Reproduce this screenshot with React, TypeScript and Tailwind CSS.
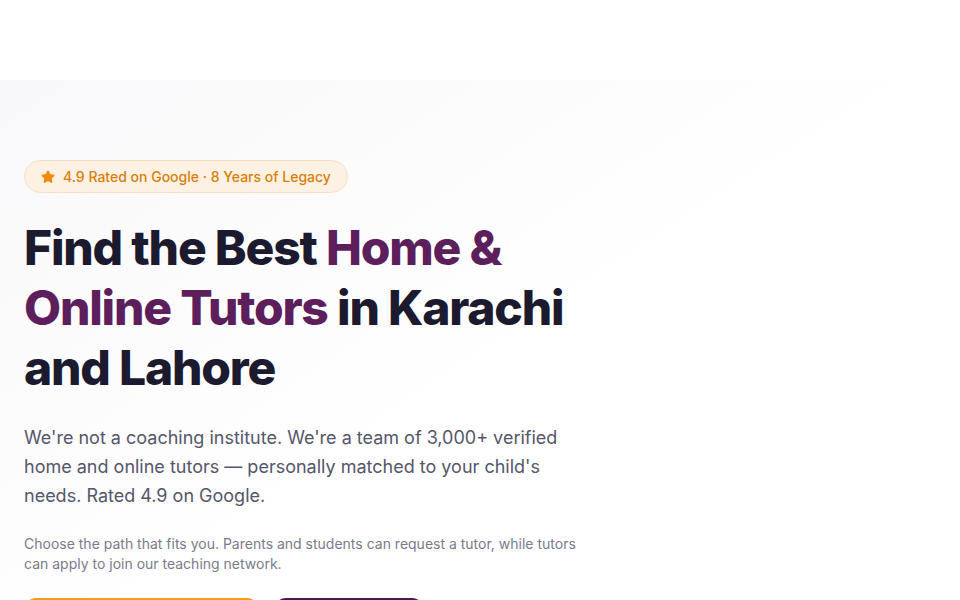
import { Star } from 'lucide-react'

export default function App() {
  return (
    <div className="min-h-screen bg-white" style={{ fontFamily: 'Inter, "Noto Sans", sans-serif' }}>
      {/* header placeholder */}
      <div className="h-20 bg-white" />

      <section className="bg-gradient-to-br from-[#f8f8fa] via-white to-white">
        <div className="px-6 pt-20 pb-16">
          <div className="max-w-[576px]">
            <div className="inline-flex items-center gap-2 rounded-full border border-[#f8dfc0] bg-[#fdf1e3] px-4 h-[33px] text-sm font-medium text-[#d97f0a]">
              <Star className="h-[14px] w-[14px] fill-[#f08c0a] text-[#f08c0a]" strokeWidth={2} />
              <span>4.9 Rated on Google · 8 Years of Legacy</span>
            </div>

            <h1 className="mt-[25px] text-[48px] leading-[60px] font-extrabold tracking-[-0.025em] text-[#1b1a2e]">
              Find the Best <span className="text-[#5c1f5c]">Home &amp; Online Tutors</span> in Karachi and Lahore
            </h1>

            <p className="mt-[25px] text-lg leading-[29px] text-[#55566a]">
              We're not a coaching institute. We're a team of 3,000+ verified home and online tutors — personally matched to your child's needs. Rated 4.9 on Google.
            </p>

            <p className="mt-6 text-sm leading-5 text-[#7a7b8a]">
              Choose the path that fits you. Parents and students can request a tutor, while tutors can apply to join our teaching network.
            </p>

            <div className="mt-6 flex items-center gap-[15px]">
              <button className="h-[52px] w-[235px] rounded-xl bg-[#f39c14] text-base font-semibold text-white">
                Request a Tutor
              </button>
              <button className="h-[52px] w-[150px] rounded-xl bg-[#4a1a4e] text-base font-semibold text-white">
                Join as Tutor
              </button>
            </div>
          </div>
        </div>
      </section>
    </div>
  )
}
